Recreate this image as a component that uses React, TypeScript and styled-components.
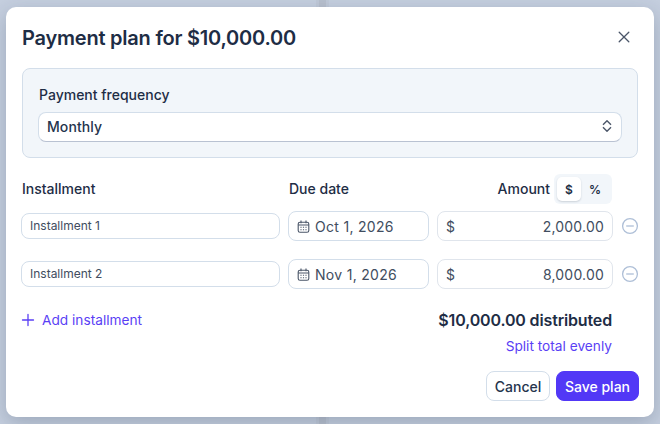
import React from 'react';
import styled, { createGlobalStyle } from 'styled-components';

const GlobalStyle = createGlobalStyle`
  html, body {
    margin: 0;
    padding: 0;
    width: 660px;
    height: 424px;
    overflow: hidden;
    font-family: Inter, "Liberation Sans", sans-serif;
    color: #1e2d45;
  }
  * { box-sizing: border-box; }
`;

const Backdrop = styled.div`
  width: 660px;
  height: 424px;
  padding: 7px 6px;
  background:
    linear-gradient(90deg, transparent 316px, #c0c9d8 316px, #c0c9d8 319px, #b8c0ce 319px, #b8c0ce 326px, #c0c9d8 326px, #c0c9d8 329px, transparent 329px),
    #c5cfdf;
`;

const Modal = styled.div`
  width: 648px;
  height: 410px;
  padding: 16px;
  background: #fff;
  border-radius: 10px;
  box-shadow: 0 6px 20px rgba(30, 45, 69, 0.24);
  display: flex;
  flex-direction: column;
`;

const Header = styled.div`
  display: flex;
  align-items: center;
  justify-content: space-between;
  height: 28px;
  margin-bottom: 17px;
`;

const Title = styled.h2`
  margin: 2px 0 0;
  font-size: 20px;
  line-height: 28px;
  font-weight: 600;
  letter-spacing: -0.22px;
  color: #1e2d45;
`;

const CloseButton = styled.button`
  border: 0;
  background: none;
  padding: 0;
  width: 16px;
  height: 16px;
  margin-right: 6px;
  color: #4a5568;
  display: flex;
`;

const FrequencyPanel = styled.div`
  height: 90px;
  padding: 16px 15px 0;
  background: #f2f6fa;
  border: 1px solid #d3deea;
  border-radius: 8px;
`;

const PanelLabel = styled.div`
  padding-left: 1px;
  font-size: 14px;
  line-height: 20px;
  font-weight: 500;
  margin-bottom: 7px;
`;

const SelectBox = styled.div`
  height: 30px;
  padding: 0 8px 2px 8px;
  display: flex;
  align-items: center;
  justify-content: space-between;
  background: #fff;
  border: 1px solid #d3deea;
  border-bottom-color: #b9c2d2;
  border-radius: 8px;
  font-size: 14px;
  letter-spacing: 0.08px;
  font-weight: 500;
  color: #25344d;
`;

const Grid = styled.div`
  display: grid;
  grid-template-columns: 259px 141px 176px 25px;
  column-gap: 8px;
  margin-left: -1px;
  align-items: center;
`;

const HeaderGrid = styled(Grid)`
  height: 30px;
  margin-top: 16px;
  margin-bottom: 7px;
`;

const ColumnTitle = styled.div`
  font-size: 14px;
  line-height: 20px;
  font-weight: 500;
  padding-left: 1px;
  color: #1e2d45;
`;

const AmountHead = styled.div`
  display: flex;
  justify-content: flex-end;
  align-items: center;
  gap: 4px;
  margin-right: 1px;
`;

const UnitToggle = styled.div`
  width: 58px;
  height: 30px;
  padding: 3px;
  background: #f2f6fa;
  border-radius: 6px;
  display: flex;
`;

const UnitOption = styled.div<{ $active?: boolean }>`
  width: 24px;
  margin-right: ${p => (p.$active ? '2px' : '0')};
  height: 24px;
  display: flex;
  align-items: center;
  justify-content: center;
  font-size: 12px;
  font-weight: 600;
  border-radius: 5px;
  color: #1e2d45;
  background: ${p => (p.$active ? '#fff' : 'transparent')};
  box-shadow: ${p => (p.$active ? '0 1px 2px rgba(30,45,69,.18)' : 'none')};
`;

const Row = styled(Grid)`
  height: 30px;
  margin-bottom: 18px;
`;

const NameInput = styled.div`
  height: 26px;
  padding: 0 8px 1px;
  display: flex;
  align-items: center;
  background: #fff;
  border: 1px solid #d3deea;
  border-radius: 8px;
  font-size: 12px;
  color: #414d60;
`;

const DateInput = styled.div`
  height: 30px;
  padding: 0 8px;
  display: flex;
  align-items: center;
  gap: 5px;
  border: 1px solid #d3deea;
  border-radius: 8px;
  font-size: 14px;
  letter-spacing: 0.3px;
  color: #414d60;
`;

const AmountInput = styled.div`
  height: 30px;
  padding: 0 8px;
  display: flex;
  align-items: center;
  justify-content: space-between;
  border: 1px solid #e0e5ec;
  border-radius: 8px;
  font-size: 14px;
  letter-spacing: 0.2px;
  color: #414d60;
`;

const RemoveButton = styled.button`
  border: 0;
  background: none;
  padding: 0;
  width: 18px;
  height: 18px;
  color: #aebfd7;
  display: flex;
`;

const Summary = styled.div`
  display: flex;
  justify-content: space-between;
  align-items: flex-start;
  padding-right: 26px;
  margin-top: 3px;
`;

const AddLink = styled.div`
  display: flex;
  align-items: center;
  gap: 7px;
  height: 20px;
  font-size: 13.7px;
  color: #5a3ff5;
  margin-left: -1px;
`;

const Totals = styled.div`
  display: flex;
  flex-direction: column;
  align-items: flex-end;
`;

const TotalText = styled.div`
  font-size: 16px;
  line-height: 20px;
  font-weight: 600;
  letter-spacing: -0.15px;
  color: #1e2d45;
`;

const SplitLink = styled.div`
  margin-top: 7px;
  font-size: 13.7px;
  line-height: 18px;
  color: #5a3ff5;
`;

const Footer = styled.div`
  display: flex;
  justify-content: flex-end;
  gap: 6px;
  margin-top: 16px;
  margin-right: -1px;
`;

const Button = styled.button<{ $primary?: boolean }>`
  height: 30px;
  padding: 0;
  width: ${p => (p.$primary ? '83px' : '64px')};
  border-radius: 8px;
  font-family: inherit;
  font-size: 14px;
  font-weight: 500;
  border: 1px solid ${p => (p.$primary ? '#5238f6' : '#d3deea')};
  background: ${p => (p.$primary ? '#5238f6' : '#fff')};
  color: ${p => (p.$primary ? '#fff' : '#25344d')};
`;

const CalendarIcon = () => (
  <svg width="13" height="13" viewBox="0 0 13 13" fill="none" stroke="#4a5568" strokeWidth="1.1">
    <rect x="1.2" y="2.2" width="10.6" height="10" rx="1.8" />
    <path d="M1.2 5h10.6M4 .6v2.6M9 .6v2.6" />
    <path d="M3.4 7.3h1.2M5.9 7.3h1.2M8.4 7.3h1.2M3.4 9.8h1.2M5.9 9.8h1.2M8.4 9.8h1.2" />
  </svg>
);

const ChevronsIcon = () => (
  <svg width="12" height="16" viewBox="0 0 12 16" fill="none" stroke="#4a5568" strokeWidth="1.4" strokeLinejoin="round">
    <path d="M2 6.8 6 2.8l4 4M2 9.2l4 4 4-4" />
  </svg>
);

const CloseIcon = () => (
  <svg width="16" height="16" viewBox="0 0 16 16" fill="none" stroke="currentColor" strokeWidth="1.3" strokeLinecap="round">
    <path d="M3.2 3.2l9.6 9.6M12.8 3.2l-9.6 9.6" />
  </svg>
);

const MinusCircleIcon = () => (
  <svg width="18" height="18" viewBox="0 0 18 18" fill="none" stroke="currentColor" strokeWidth="1.3">
    <circle cx="9" cy="9" r="7.4" />
    <path d="M5.2 9h7.6" />
  </svg>
);

const PlusIcon = () => (
  <svg width="14" height="14" viewBox="0 0 14 14" fill="none" stroke="#5a3ff5" strokeWidth="1.3" strokeLinecap="round">
    <path d="M7 1.5v11M1.5 7h11" />
  </svg>
);

const installments = [
  { name: 'Installment 1', date: 'Oct 1, 2026', amount: '2,000.00' },
  { name: 'Installment 2', date: 'Nov 1, 2026', amount: '8,000.00' },
];

export default function App() {
  return (
    <Backdrop>
      <GlobalStyle />
      <Modal>
        <Header>
          <Title>Payment plan for $10,000.00</Title>
          <CloseButton><CloseIcon /></CloseButton>
        </Header>
        <FrequencyPanel>
          <PanelLabel>Payment frequency</PanelLabel>
          <SelectBox>
            Monthly
            <ChevronsIcon />
          </SelectBox>
        </FrequencyPanel>
        <HeaderGrid>
          <ColumnTitle>Installment</ColumnTitle>
          <ColumnTitle>Due date</ColumnTitle>
          <AmountHead>
            <ColumnTitle>Amount</ColumnTitle>
            <UnitToggle>
              <UnitOption $active>$</UnitOption>
              <UnitOption>%</UnitOption>
            </UnitToggle>
          </AmountHead>
        </HeaderGrid>
        {installments.map(item => (
          <Row key={item.name}>
            <NameInput>{item.name}</NameInput>
            <DateInput><CalendarIcon />{item.date}</DateInput>
            <AmountInput><span>$</span><span>{item.amount}</span></AmountInput>
            <RemoveButton><MinusCircleIcon /></RemoveButton>
          </Row>
        ))}
        <Summary>
          <AddLink><PlusIcon />Add installment</AddLink>
          <Totals>
            <TotalText>$10,000.00 distributed</TotalText>
            <SplitLink>Split total evenly</SplitLink>
          </Totals>
        </Summary>
        <Footer>
          <Button>Cancel</Button>
          <Button $primary>Save plan</Button>
        </Footer>
      </Modal>
    </Backdrop>
  );
}
